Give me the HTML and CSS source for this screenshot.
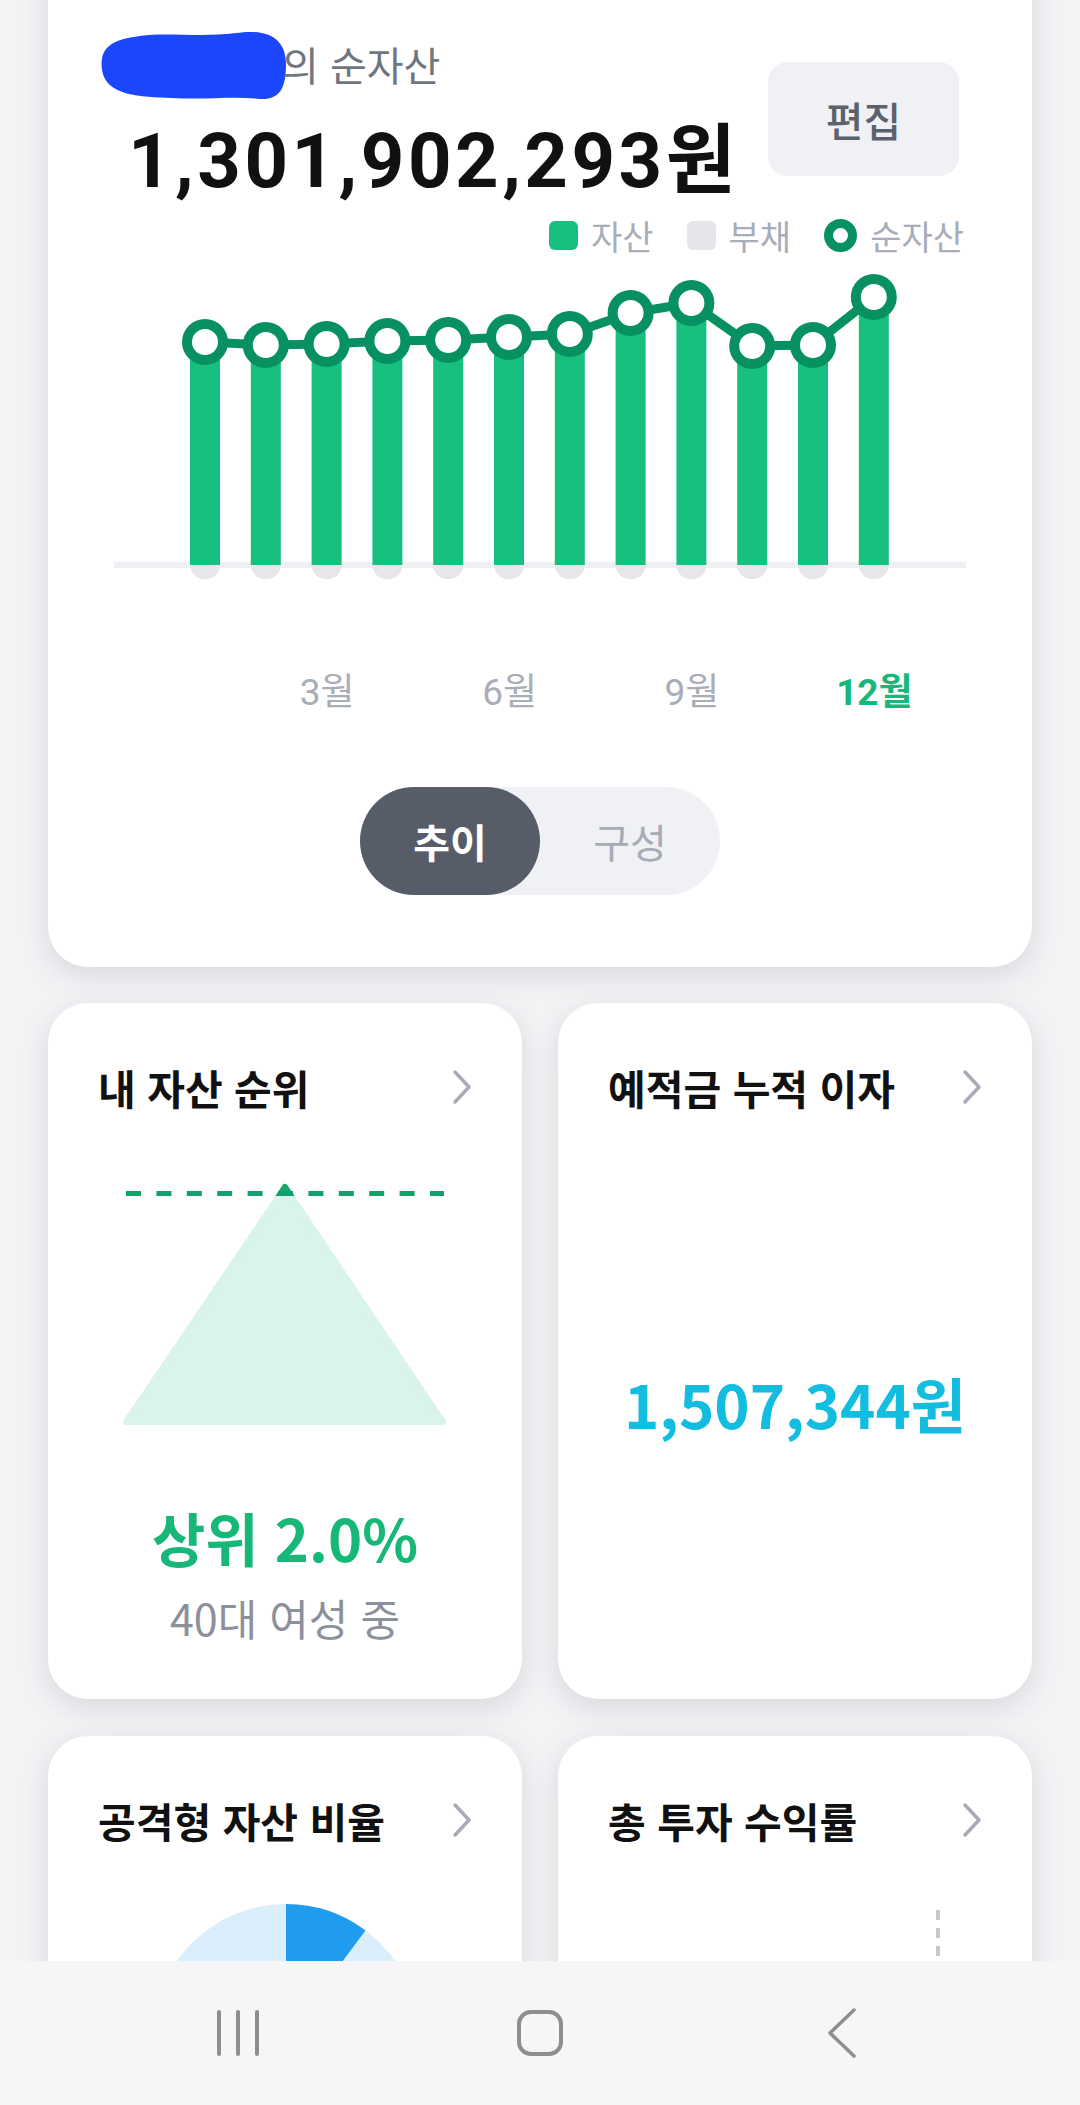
FILE: index.html
```html
<!DOCTYPE html>
<html lang="ko">
<head>
    <meta charset="UTF-8">
    <meta name="viewport" content="width=device-width, initial-scale=1.0">
    <title>순자산</title>
    <link rel="stylesheet" href="styles.css">
</head>
<body>
    <div class="screen">
        <!-- 순자산 요약 -->
        <section class="card summary">
            <div class="summary-head">
                <div class="summary-title">
                    <div class="owner">
                        <svg class="blot" viewBox="0 0 186 72" width="186" height="72">
                            <path d="M34 9 C62 3 96 10 136 5 C170 0 186 12 186 36 C186 60 180 72 160 71 C132 68 108 72 72 70 C40 69 6 68 2 42 C-1 20 12 12 34 9 Z" fill="#1b46fb"/>
                        </svg>
                        <span>의 순자산</span>
                    </div>
                    <div class="total">1,301,902,293원</div>
                </div>
                <button class="edit-btn">편집</button>
            </div>

            <div class="legend">
                <span class="legend-item"><i class="mark asset"></i>자산</span>
                <span class="legend-item"><i class="mark debt"></i>부채</span>
                <span class="legend-item"><i class="mark net"></i>순자산</span>
            </div>

            <svg class="trend-chart" viewBox="0 0 852 320" width="852" height="320">
                <line x1="0" y1="295" x2="852" y2="295" stroke="#eef0f3" stroke-width="6"/>
                <g fill="#e5e7eb">
                    <rect x="76" y="280" width="30" height="29" rx="14"/>
                    <rect x="136.8" y="280" width="30" height="29" rx="14"/>
                    <rect x="197.6" y="280" width="30" height="29" rx="14"/>
                    <rect x="258.4" y="280" width="30" height="29" rx="14"/>
                    <rect x="319.2" y="280" width="30" height="29" rx="14"/>
                    <rect x="380" y="280" width="30" height="29" rx="14"/>
                    <rect x="440.8" y="280" width="30" height="29" rx="14"/>
                    <rect x="501.6" y="280" width="30" height="29" rx="14"/>
                    <rect x="562.4" y="280" width="30" height="29" rx="14"/>
                    <rect x="623.2" y="280" width="30" height="29" rx="14"/>
                    <rect x="684" y="280" width="30" height="29" rx="14"/>
                    <rect x="744.8" y="280" width="30" height="29" rx="14"/>
                </g>
                <g fill="#17c07f">
                    <rect x="76" y="72" width="30" height="223"/>
                    <rect x="136.8" y="75" width="30" height="220"/>
                    <rect x="197.6" y="74" width="30" height="221"/>
                    <rect x="258.4" y="71" width="30" height="224"/>
                    <rect x="319.2" y="70" width="30" height="225"/>
                    <rect x="380" y="67" width="30" height="228"/>
                    <rect x="440.8" y="64" width="30" height="231"/>
                    <rect x="501.6" y="43" width="30" height="252"/>
                    <rect x="562.4" y="33" width="30" height="262"/>
                    <rect x="623.2" y="76" width="30" height="219"/>
                    <rect x="684" y="75" width="30" height="220"/>
                    <rect x="744.8" y="27" width="30" height="268"/>
                </g>
                <polyline points="91,72 151.8,75 212.6,74 273.4,71 334.2,70 395,67 455.8,64 516.6,43 577.4,33 638.2,76 699,75 759.8,27"
                          fill="none" stroke="#079160" stroke-width="9" stroke-linejoin="round"/>
                <g fill="#fff" stroke="#079160" stroke-width="10">
                    <circle cx="91" cy="72" r="18"/>
                    <circle cx="151.8" cy="75" r="18"/>
                    <circle cx="212.6" cy="74" r="18"/>
                    <circle cx="273.4" cy="71" r="18"/>
                    <circle cx="334.2" cy="70" r="18"/>
                    <circle cx="395" cy="67" r="18"/>
                    <circle cx="455.8" cy="64" r="18"/>
                    <circle cx="516.6" cy="43" r="18"/>
                    <circle cx="577.4" cy="33" r="18"/>
                    <circle cx="638.2" cy="76" r="18"/>
                    <circle cx="699" cy="75" r="18"/>
                    <circle cx="759.8" cy="27" r="18"/>
                </g>
            </svg>

            <div class="months">
                <span></span><span></span><span>3월</span>
                <span></span><span></span><span>6월</span>
                <span></span><span></span><span>9월</span>
                <span></span><span></span><span class="current">12월</span>
            </div>

            <div class="toggle">
                <span class="toggle-opt active">추이</span>
                <span class="toggle-opt">구성</span>
            </div>
        </section>

        <div class="tiles">
            <!-- 내 자산 순위 -->
            <section class="card tile">
                <div class="tile-head">
                    <h3>내 자산 순위</h3>
                    <svg class="chevron" viewBox="0 0 20 36" width="20" height="36"><polyline points="3,3 17,18 3,33" fill="none" stroke="#a7abb6" stroke-width="3.5" stroke-linecap="round" stroke-linejoin="round"/></svg>
                </div>
                <svg class="rank-chart" viewBox="0 0 330 250" width="330" height="250">
                    <defs>
                        <clipPath id="tip-clip"><rect x="0" y="0" width="330" height="17"/></clipPath>
                    </defs>
                    <path d="M165 8 L323 243 L6 243 Z" fill="#d9f4ea" stroke="#d9f4ea" stroke-width="6" stroke-linejoin="round"/>
                    <path d="M165 8 L323 243 L6 243 Z" fill="#17a871" stroke="#17a871" stroke-width="6" stroke-linejoin="round" clip-path="url(#tip-clip)"/>
                    <line x1="6" y1="14.5" x2="324" y2="14.5" stroke="#12a06a" stroke-width="5" stroke-dasharray="15 15.4"/>
                </svg>
                <div class="rank-value">상위 2.0%</div>
                <div class="rank-note">40대 여성 중</div>
            </section>

            <!-- 예적금 누적 이자 -->
            <section class="card tile">
                <div class="tile-head">
                    <h3>예적금 누적 이자</h3>
                    <svg class="chevron" viewBox="0 0 20 36" width="20" height="36"><polyline points="3,3 17,18 3,33" fill="none" stroke="#a7abb6" stroke-width="3.5" stroke-linecap="round" stroke-linejoin="round"/></svg>
                </div>
                <div class="interest">1,507,344원</div>
            </section>

            <!-- 공격형 자산 비율 -->
            <section class="card tile">
                <div class="tile-head">
                    <h3>공격형 자산 비율</h3>
                    <svg class="chevron" viewBox="0 0 20 36" width="20" height="36"><polyline points="3,3 17,18 3,33" fill="none" stroke="#a7abb6" stroke-width="3.5" stroke-linecap="round" stroke-linejoin="round"/></svg>
                </div>
                <svg class="pie" viewBox="0 0 280 180" width="280" height="180">
                    <circle cx="141" cy="141" r="133" fill="#dbeefc"/>
                    <path d="M141 141 L141 8 A133 133 0 0 1 220.5 34.4 Z" fill="#1f9cee"/>
                </svg>
            </section>

            <!-- 총 투자 수익률 -->
            <section class="card tile">
                <div class="tile-head">
                    <h3>총 투자 수익률</h3>
                    <svg class="chevron" viewBox="0 0 20 36" width="20" height="36"><polyline points="3,3 17,18 3,33" fill="none" stroke="#a7abb6" stroke-width="3.5" stroke-linecap="round" stroke-linejoin="round"/></svg>
                </div>
                <svg class="yield-chart" viewBox="0 0 374 120" width="374" height="120">
                    <line x1="330" y1="0" x2="330" y2="120" stroke="#c4c7ce" stroke-width="4" stroke-dasharray="10 8"/>
                </svg>
            </section>
        </div>
    </div>

    <nav class="sys-nav">
        <svg viewBox="0 0 60 50" width="60" height="50">
            <g stroke="#8e8e8e" stroke-width="4" stroke-linecap="round">
                <line x1="11" y1="4" x2="11" y2="46"/>
                <line x1="30" y1="4" x2="30" y2="46"/>
                <line x1="49" y1="4" x2="49" y2="46"/>
            </g>
        </svg>
        <svg viewBox="0 0 60 50" width="60" height="50">
            <rect x="9" y="4" width="42" height="42" rx="12" fill="none" stroke="#8e8e8e" stroke-width="4"/>
        </svg>
        <svg viewBox="0 0 60 50" width="60" height="50">
            <polyline points="42,2 18,25 42,48" fill="none" stroke="#8e8e8e" stroke-width="3.5" stroke-linecap="round" stroke-linejoin="round"/>
        </svg>
    </nav>
</body>
</html>
```

FILE: styles.css
```css
* {
    box-sizing: border-box;
    margin: 0;
    padding: 0;
}

body {
    background: #f2f3f5;
    font-family: "Noto Sans CJK KR", "Noto Sans", sans-serif;
    color: #111;
    height: 2105px;
    overflow: hidden;
}

.screen {
    padding: 0 48px;
}

.card {
    background: #fff;
    border-radius: 40px;
    box-shadow: 0 8px 28px rgba(30, 35, 45, 0.13);
}

/* 순자산 요약 카드 */
.summary {
    margin-top: -60px;
    padding: 88px 66px 72px;
}

.summary-head {
    display: flex;
    justify-content: space-between;
    align-items: flex-start;
    padding-left: 14px;
}

.owner {
    display: flex;
    align-items: center;
    height: 72px;
}

.blot {
    display: block;
    margin-left: -28px;
    margin-right: -4px;
}

.owner span {
    font-size: 40px;
    line-height: 48px;
    color: #70757f;
}

.total {
    font-family: Roboto, "Noto Sans CJK KR", sans-serif;
    font-weight: 700;
    font-size: 76px;
    line-height: 76px;
    letter-spacing: 3.5px;
    margin-top: 23px;
    color: #111;
}

.edit-btn {
    margin-top: 34px;
    margin-right: 7px;
    width: 191px;
    height: 114px;
    border: none;
    border-radius: 20px;
    background: #f0f1f4;
    color: #5b616d;
    font: 500 41px "Noto Sans CJK KR", sans-serif;
}

.legend {
    display: flex;
    justify-content: flex-end;
    align-items: center;
    gap: 33px;
    margin-top: 19px;
    margin-right: 2px;
    height: 34px;
    font-size: 34px;
    color: #a9adb7;
}

.legend-item {
    display: flex;
    align-items: center;
    gap: 13px;
}

.mark {
    display: block;
    width: 29px;
    height: 29px;
    border-radius: 6px;
}

.mark.asset { background: #17c07f; }
.mark.debt { background: #e4e6ea; }
.mark.net {
    width: 33px;
    height: 33px;
    border-radius: 50%;
    border: 9px solid #079160;
    background: #fff;
}

.trend-chart {
    display: block;
    margin-top: 18px;
}

.months {
    display: grid;
    grid-template-columns: repeat(12, 60.8px);
    justify-content: center;
    margin-top: 83px;
    font-family: Roboto, "Noto Sans CJK KR", sans-serif;
    font-size: 37px;
    line-height: 40px;
    color: #a9adb8;
    text-align: center;
}

.months span {
    white-space: nowrap;
    display: flex;
    justify-content: center;
}

.months .current {
    color: #17b877;
    font-weight: 700;
}

.toggle {
    display: flex;
    width: 360px;
    height: 108px;
    margin: 74px auto 0;
    border-radius: 54px;
    background: #f0f1f5;
}

.toggle-opt {
    flex: 1;
    display: flex;
    align-items: center;
    justify-content: center;
    border-radius: 54px;
    font-size: 40px;
    color: #a7abb5;
}

.toggle-opt.active {
    background: #575c69;
    color: #fff;
    font-weight: 700;
}

/* 하단 타일 */
.tiles {
    display: grid;
    grid-template-columns: 1fr 1fr;
    gap: 37px 36px;
    margin-top: 36px;
}

.tile {
    height: 696px;
    padding: 61px 50px 0;
    overflow: hidden;
}

.tile-head {
    display: flex;
    justify-content: space-between;
    align-items: center;
    height: 46px;
}

.tile-head h3 {
    font-size: 41px;
    line-height: 46px;
    font-weight: 700;
    color: #111;
}

.chevron {
    display: block;
}

.rank-chart {
    display: block;
    margin: 69px auto 0;
}

.rank-value {
    margin-top: 76px;
    text-align: center;
    font-size: 58px;
    line-height: 64px;
    font-weight: 700;
    color: #17b877;
}

.rank-note {
    margin-top: 25px;
    text-align: center;
    font-size: 43px;
    line-height: 46px;
    color: #8b909b;
}

.interest {
    margin-top: 260px;
    text-align: center;
    font-size: 60px;
    line-height: 66px;
    font-weight: 700;
    color: #12bde0;
}

.pie {
    display: block;
    margin: 53px auto 0;
}

.yield-chart {
    display: block;
    margin-top: 67px;
}

/* 시스템 내비게이션 */
.sys-nav {
    position: fixed;
    left: 0;
    right: 0;
    bottom: 0;
    height: 144px;
    background: #f6f6f8;
    display: flex;
    justify-content: center;
    align-items: center;
    gap: 242px;
}
```
